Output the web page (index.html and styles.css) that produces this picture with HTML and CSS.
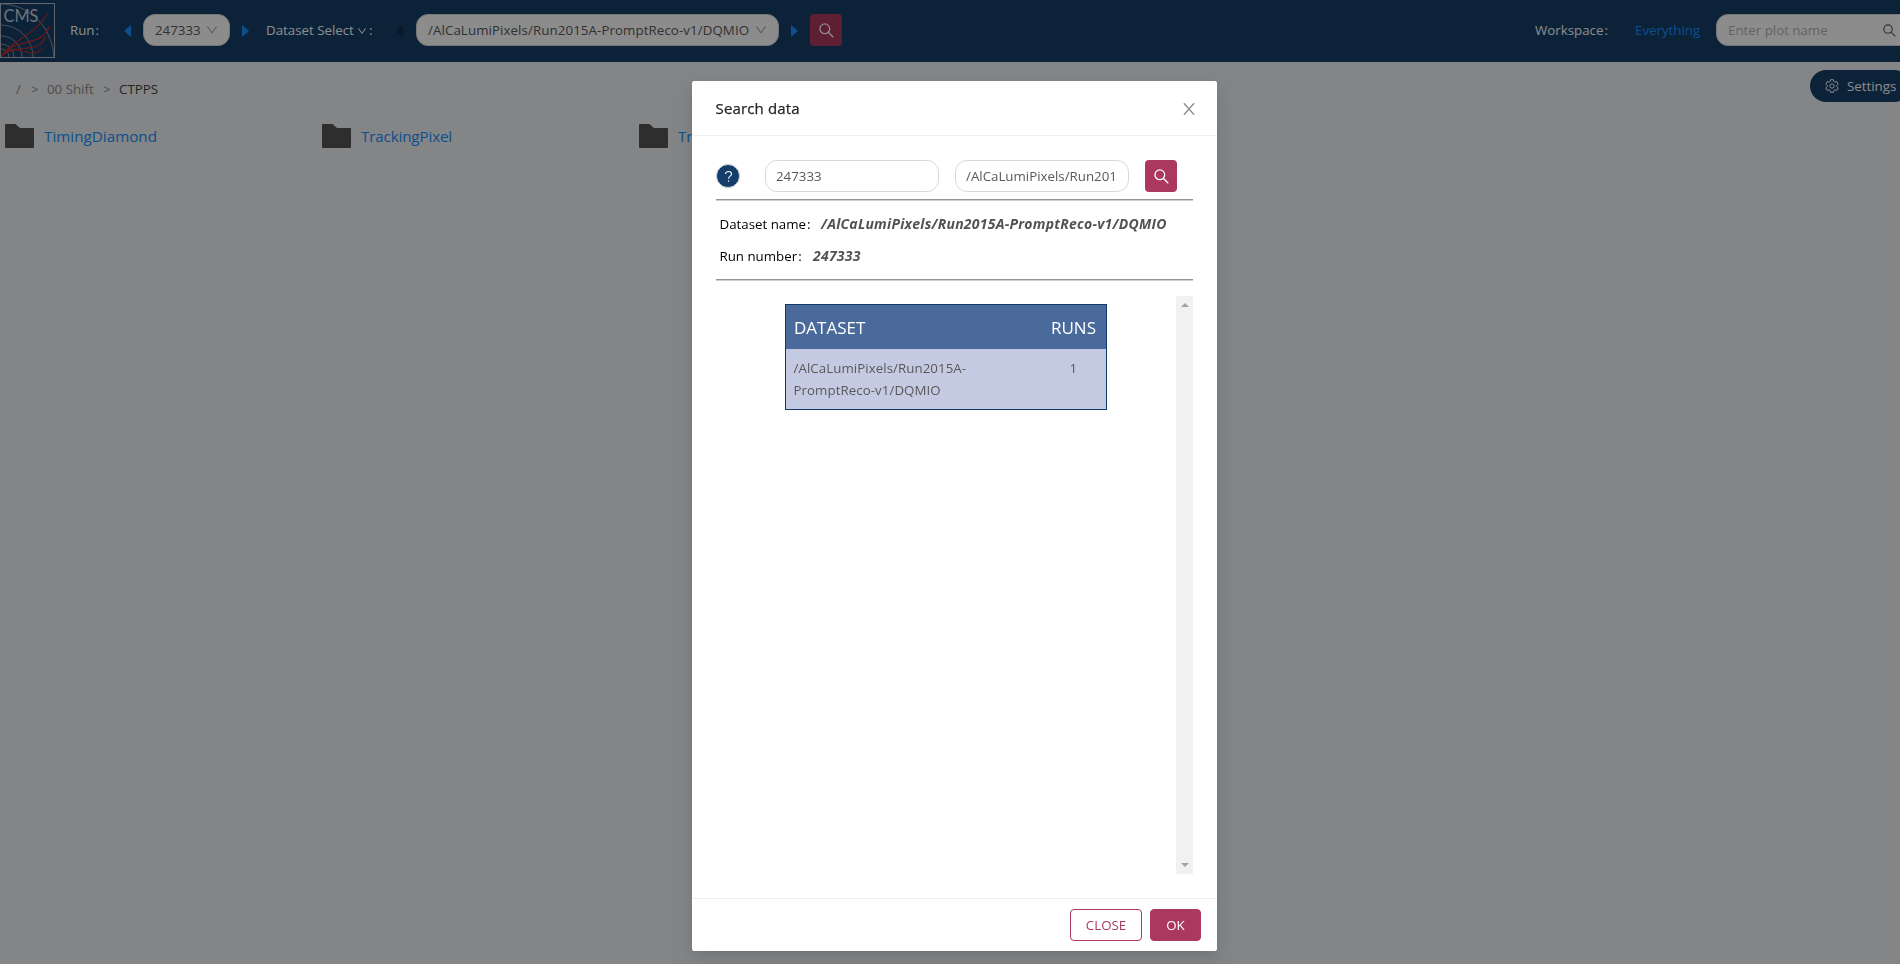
FILE: index.html
```html
<!DOCTYPE html>
<html lang="en">
<head>
<meta charset="utf-8">
<title>DQM GUI</title>
<link rel="stylesheet" href="styles.css">
</head>
<body>
<svg class="defs" width="0" height="0">
  <symbol id="search" viewBox="0 0 16 16"><g fill="none" stroke="currentColor" stroke-width="1.400"><circle cx="6.200" cy="6.200" r="5.200"/><path d="M9.900 9.900L15.200 15.200"/></g></symbol>
  <symbol id="down" viewBox="64 64 896 896"><path d="M884 256h-75c-5.100 0-9.900 2.500-12.900 6.600L512 654.200 227.900 262.600c-3-4.100-7.800-6.600-12.900-6.600h-75c-6.500 0-10.300 7.400-6.500 12.700l352.600 486.100c12.800 17.600 39 17.600 51.700 0l352.600-486.100c3.900-5.300.1-12.700-6.400-12.700z"/></symbol>
  <symbol id="folder" viewBox="0 0 29 24"><path d="M0 1Q0 0 1 0H10.500L15 4H28Q29 4 29 5V23Q29 24 28 24H1Q0 24 0 23Z"/></symbol>
</svg>

<header class="topbar">
  <svg class="logo" viewBox="0 0 55 55" fill="none">
    <g stroke="#8793a3" stroke-width="1">
      <circle cx="1" cy="54" r="8"/><circle cx="1" cy="54" r="13"/><circle cx="1" cy="54" r="21"/><circle cx="1" cy="54" r="32"/>
      <path d="M0 1C30 1 52 24 54 54"/>
    </g>
    <text class="logo-text" x="3.500" y="18.500" textLength="35" lengthAdjust="spacingAndGlyphs">CMS</text>
    <g stroke="#c42f28" stroke-width="1.200">
      <path d="M1 54C12 36 35 33 48 10"/><path d="M1 54C14 33 42 46 49 23"/><path d="M1 54C12 38 38 54 46 33"/><path d="M1 54C12 41 25 50 32 50C38 50 40 49 43 45"/>
    </g>
    <rect x=".5" y=".5" width="54" height="54" stroke="#b4bcc7"/>
  </svg>
  <span class="label run">Run<i>:</i></span>
  <i class="arrow left first"></i>
  <div class="select sel-run"><span>247333</span><svg class="chev"><use href="#down"/></svg></div>
  <i class="arrow right"></i>
  <span class="label ds">Dataset Select</span><svg class="chev light"><use href="#down"/></svg><span class="label colon">:</span>
  <i class="arrow left off"></i>
  <div class="select sel-ds"><span class="ds-path">/AlCaLumiPixels/Run2015A-PromptReco-v1/DQMIO</span><svg class="chev"><use href="#down"/></svg></div>
  <i class="arrow right"></i>
  <button class="search-btn top-search"><svg><use href="#search"/></svg></button>
  <div class="top-right">
    <span class="label ws">Workspace<i>:</i></span>
    <a class="everything">Everything</a>
    <div class="plot-input"><span>Enter plot name</span><svg><use href="#search"/></svg></div>
  </div>
</header>

<div class="subbar">
  <nav class="crumbs"><span class="c1">/</span><b>&gt;</b><span class="c2">00 Shift</span><b>&gt;</b><span class="current">CTPPS</span></nav>
  <button class="settings">
    <svg viewBox="0 0 14 14" fill="none" stroke="#fff" stroke-width="1"><circle cx="7" cy="7" r="2.200"/><path d="M5.600 .7H8.400L8.900 2.500L10 3.100L11.800 2.600L13.200 5L11.900 6.300V7.700L13.200 9L11.800 11.400L10 10.900L8.900 11.500L8.400 13.300H5.600L5.100 11.500L4 10.900L2.200 11.400L.8 9L2.100 7.700V6.300L.8 5L2.200 2.600L4 3.100L5.100 2.500Z" stroke-linejoin="round"/></svg>
    <span>Settings</span>
  </button>
</div>
<main class="folders">
  <a class="folder"><svg><use href="#folder"/></svg><span class="wide">TimingDiamond</span></a>
  <a class="folder"><svg><use href="#folder"/></svg><span>TrackingPixel</span></a>
  <a class="folder"><svg><use href="#folder"/></svg><span>TrackingStrip</span></a>
</main>

<div class="mask">
  <section class="modal">
    <div class="modal-head"><span>Search data</span>
      <svg class="close-x" viewBox="0 0 12 12" fill="none" stroke="#8c8c8c" stroke-width="1.300"><path d="M.9 .2L11.100 11.800M11.100 .2L.9 11.800"/></svg>
    </div>
    <div class="modal-body">
      <div class="form">
        <div class="help"><svg viewBox="0 0 12 14" fill="none" stroke="#fff" stroke-width="1.200"><path d="M2.700 4.300C2.700 .7 9.300 .7 9.300 4.300C9.300 6.700 6 6.500 6 9.500"/><path d="M6 11.200V12.700"/></svg></div>
        <div class="input in-run"><span>247333</span></div>
        <div class="input in-ds"><span>/AlCaLumiPixels/Run201</span></div>
        <button class="search-btn"><svg><use href="#search"/></svg></button>
      </div>
      <hr>
      <div class="info"><p><span class="k1">Dataset name<i>:</i></span><strong class="v1">/AlCaLumiPixels/Run2015A-PromptReco-v1/DQMIO</strong></p>
      <p><span class="k2">Run number<i>:</i></span><strong class="v2">247333</strong></p></div>
      <hr>
      <div class="results">
        <div class="table">
          <div class="thead"><span class="th1">DATASET</span><span class="th2">RUNS</span></div>
          <div class="trow"><div class="name"><span class="n1">/AlCaLumiPixels/Run2015A-</span><br><span class="n2">PromptReco-v1/DQMIO</span></div><span class="count">1</span></div>
        </div>
        <div class="scrollbar"><i class="up"></i><i class="dn"></i></div>
      </div>
    </div>
    <div class="modal-foot"><button class="btn close"><span>CLOSE</span></button><button class="btn ok"><span>OK</span></button></div>
  </section>
</div>
</body>
</html>
```
FILE: styles.css
```css
* { box-sizing: border-box; }
body { margin: 0; height: 964px; overflow: hidden; background: #f0f2f5; font: 13.3px/22px "Open Sans", "Noto Sans", sans-serif; color: #595959; }
button { font: inherit; padding: 0; border: 0; }
svg { display: block; flex: none; fill: currentColor; }
svg[fill="none"] { fill: none; }
span { white-space: nowrap; }
.label i, .info i { font-style: normal; margin-left: 1px; }
.defs { position: absolute; }

.topbar { display: flex; align-items: center; height: 62px; background: #143e69; overflow: hidden; }
.topbar > * { flex: none; }
.topbar > .select, .search-btn.top-search, .plot-input, .topbar > .logo { margin-top: -2px; }
.logo { width: 55px; height: 55px; }
.logo-text { font: 16.5px "Lato", sans-serif; fill: #cbd1d8; }
.label { color: #fff; margin-top: -3px; }
.run { width: 54px; margin-left: 15px; }
.arrow { width: 0; height: 0; border: 6px solid transparent; }
.arrow.left { border-left: 0; border-right: 7px solid #1890ff; margin-right: 12px; }
.arrow.right { border-right: 0; border-left: 7px solid #1890ff; margin-left: 12px; }
.arrow.off { border-right-color: #102c49; margin-left: 22px; }
.select { display: flex; align-items: center; justify-content: space-between; height: 32px; padding: 0 11px; border: 1px solid #d9d9d9; border-radius: 12px; background: #fff; }
.select span { margin-top: -1px; }
.sel-run { width: 87px; }
.sel-ds { width: 363px; margin-left: 1px; }
.ds-path { letter-spacing: .09px; }
.chev { width: 12px; height: 12px; color: #a6a6a6; }
.chev.light { width: 10px; height: 10px; color: #fff; margin-left: 5px; }
.ds { width: 86px; margin-left: 17px; }
.colon { margin-left: 2px; width: 5px; }
.search-btn { display: flex; align-items: center; justify-content: center; width: 32px; height: 32px; border-radius: 4px; background: #ab395f; color: #fff; }
.search-btn svg { width: 15px; height: 15px; }
.topbar > .top-search { margin-left: 12px; }
.top-right { display: flex; align-items: center; width: 365px; margin-left: auto; }
.top-right > * { flex: none; }
.ws { width: 100px; }
.everything { width: 81px; color: #1890ff; margin-top: -3px; }
.plot-input { display: flex; align-items: center; justify-content: space-between; width: 200px; height: 32px; padding: 0 20px 0 11px; border-radius: 12px; border: 1px solid #d9d9d9; background: #fff; color: #b4b4b4; }
.plot-input span { margin-top: -1px; }
.plot-input svg { width: 13px; height: 13px; color: #595959; margin-right: -1px; }

.subbar { display: flex; justify-content: space-between; height: 54px; padding: 8px 0 0 16px; overflow: hidden; }
.crumbs { display: flex; margin-top: 8px; color: #8c8c8c; }
.crumbs b { font-weight: 400; width: 6px; margin: 0 10px; }
.c1 { width: 5px; }
.c2 { width: 46px; }
.current { color: #424242; }
.settings { display: flex; align-items: center; gap: 8px; width: 100px; height: 32px; margin-right: -10px; padding-left: 15px; border-radius: 16px; background: #143e69; color: #fff; }
.settings svg { width: 14px; height: 14px; }
.folders { display: grid; grid-template-columns: repeat(3, 317px); padding: 8px 0 0 5px; }
.folder { display: flex; align-items: center; gap: 10px; font-size: 15.2px; letter-spacing: -.15px; color: #1890ff; height: 24px; }
.folder svg { width: 29px; height: 24px; color: #555; }
.folder span { margin-top: -1px; }
.folder .wide { letter-spacing: .02px; }

.mask { position: fixed; inset: 0; background: rgba(0, 0, 0, .45); padding-top: 81px; }
.modal { width: 525px; height: 870px; margin-left: 692px; display: flex; flex-direction: column; background: #fff; border-radius: 2px; box-shadow: 0 3px 6px -4px rgba(0,0,0,.12), 0 6px 16px rgba(0,0,0,.08), 0 9px 28px 8px rgba(0,0,0,.05); }
.modal-head { display: flex; align-items: center; justify-content: space-between; height: 55px; padding: 0 22px 0 23.500px; border-bottom: 1px solid #f0f0f0; font-size: 15px; font-weight: 500; letter-spacing: .15px; color: #262626; }
.modal-head span { -webkit-text-stroke: .25px #262626; }
.close-x { width: 12px; height: 12px; margin-top: 2px; }
.modal-body { flex: 1; padding: 24px; }
.form { display: flex; align-items: center; height: 32px; }
.help { display: flex; align-items: center; justify-content: center; width: 24px; height: 24px; margin: 0 25px 0 0; border-radius: 50%; background: #143e69; border: 1px solid #ccd3dc; }
.help svg { width: 11px; height: 13px; }
.input { width: 174px; height: 32px; margin-right: 16px; padding: 4px 10px; border: 1px solid #d9d9d9; border-radius: 12px; }
hr { height: 2px; margin: 7px 0 0; border: 0; border-top: 1px solid #949494; border-bottom: 1px solid #cfcfcf; }
.info { height: 78px; padding: 12px 3.500px 0; color: #000; }
.info p { display: flex; margin: 0 0 10px; line-height: 22px; height: 22px; }
.info + hr { margin-top: 0; }
.info strong { color: #525252; font-size: 14px; font-style: italic; font-weight: 700; white-space: nowrap; letter-spacing: .24px; }
.k1 { width: 101.500px; }
.k2 { width: 93.500px; }
.results { display: flex; height: 578px; margin-top: 15px; }
.table { width: 322px; height: 106px; margin: 8px 0 0 69px; border: 1px solid #0d3b6b; background: #c5cae3; }
.thead { display: flex; justify-content: space-between; align-items: center; height: 44px; padding: 1px 10px 0 8px; background: #4a6a9b; color: #fff; font-size: 17px; }
.trow { display: flex; padding-top: 8px; padding-left: 7.500px; }
.n1, .n2 { letter-spacing: .06px; }
.name { width: 276px; }
.scrollbar { display: flex; flex-direction: column; justify-content: space-between; align-items: center; width: 17px; height: 578px; margin-left: auto; padding: 7px 0; background: #f1f1f1; }
.up, .dn { border: 4px solid transparent; }
.up { border-top: 0; border-bottom-color: #a3a3a3; }
.dn { border-bottom: 0; border-top-color: #a3a3a3; }
.modal-foot { display: flex; justify-content: flex-end; gap: 8px; height: 53px; padding: 10px 16px; border-top: 1px solid #f0f0f0; }
.btn { height: 32px; border-radius: 4px; border: 1px solid #ab395f; }
.close { width: 72px; background: #fff; color: #ab395f; }
.ok { width: 51px; background: #ab395f; color: #fff; }
```
